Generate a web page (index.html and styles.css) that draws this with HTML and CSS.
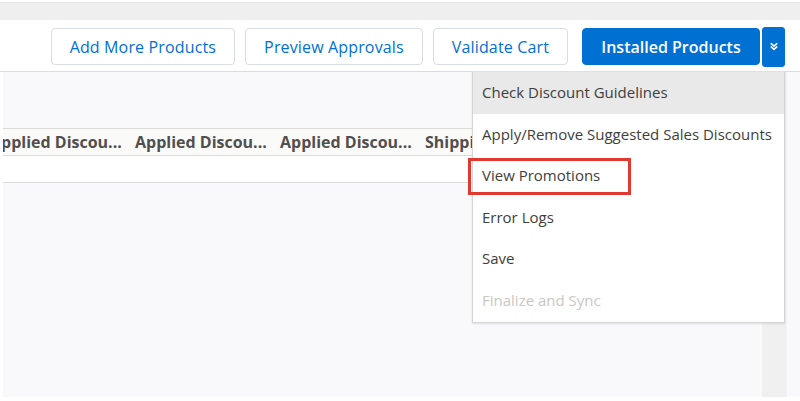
FILE: index.html
```html
<!DOCTYPE html>
<html>
<head>
<meta charset="utf-8">
<link rel="stylesheet" href="styles.css">
</head>
<body>
<div class="page">
  <div class="topband"></div>
  <div class="toolbar">
    <button class="btn">Add More Products</button>
    <button class="btn">Preview Approvals</button>
    <button class="btn">Validate Cart</button>
    <div class="split">
      <button class="btn btn-brand">Installed Products</button>
      <button class="btn btn-brand btn-icon" aria-label="More actions">
        <svg width="8" height="9" viewBox="0 0 10 10"><path d="M1.5 1.5 L5 4.5 L8.5 1.5 M1.5 5.5 L5 8.5 L8.5 5.5" fill="none" stroke="#fff" stroke-width="2" stroke-linecap="round" stroke-linejoin="round"/></svg>
      </button>
    </div>
  </div>
  <div class="main">
    <div class="content">
      <div class="table">
        <div class="row head">
          <div class="cell">Applied Discou...</div>
          <div class="cell">Applied Discou...</div>
          <div class="cell">Applied Discou...</div>
          <div class="cell cut">Shipping</div>
        </div>
        <div class="row body"></div>
      </div>
    </div>
    <div class="track"></div>
    <div class="edge"></div>
  </div>
  <ul class="menu">
    <li class="item hover">Check Discount Guidelines</li>
    <li class="item">Apply/Remove Suggested Sales Discounts</li>
    <li class="item">View Promotions</li>
    <li class="item">Error Logs</li>
    <li class="item">Save</li>
    <li class="item disabled">Finalize and Sync</li>
  </ul>
  <div class="highlight"></div>
</div>
</body>
</html>
```

FILE: styles.css
```css
* { box-sizing: border-box; }
html, body { margin: 0; padding: 0; }
body {
  width: 800px;
  height: 401px;
  overflow: hidden;
  background: #ffffff;
  font-family: "Open Sans", "Liberation Sans", sans-serif;
}
.page {
  position: relative;
  height: 401px;
  display: flex;
  flex-direction: column;
  padding-top: 2px;
}
.topband {
  height: 18px;
  background: #f0efef;
  border-top: 1px solid #e6e5e5;
}
.toolbar {
  height: 52px;
  background: #ffffff;
  border-bottom: 1px solid #dcdcdc;
  display: flex;
  align-items: center;
  justify-content: flex-end;
  padding-right: 15px;
  padding-top: 2px;
}
.btn {
  height: 37px;
  margin-left: 10px;
  padding: 0 18px;
  border: 1px solid #d8dde6;
  border-radius: 4px;
  background: #ffffff;
  color: #0070d2;
  font-family: "Open Sans", "Liberation Sans", sans-serif;
  font-size: 16px;
  letter-spacing: 0.15px;
  white-space: nowrap;
}
.btn:first-child { margin-left: 0; }
.split {
  display: flex;
  align-items: center;
  margin-left: 14px;
}
.btn-brand {
  margin-left: 0;
  background: #0070d2;
  border-color: #0070d2;
  color: #ffffff;
  font-weight: 600;
  letter-spacing: 0;
  width: 178px;
  padding: 0;
}
.btn-icon {
  width: 23px;
  height: 40px;
  margin-left: 2px;
  padding: 0;
  display: flex;
  align-items: center;
  justify-content: center;
  border-radius: 3px;
}
.main {
  flex: 1;
  display: flex;
  background: #ffffff;
  padding-left: 3px;
  padding-bottom: 4px;
}
.content {
  width: 759px;
  background: #f9f9fc;
  padding-top: 56px;
  overflow: hidden;
}
.track {
  width: 24px;
  background: #f0f0f0;
}
.edge {
  flex: 1;
  background: #f9f9fc;
  border-left: 1px solid #f3f3f6;
}
.table {
  margin-left: -13px;
}
.row {
  display: flex;
  height: 27px;
  border-bottom: 1px solid #dddbda;
}
.row.head {
  background: #fafaf9;
  border-top: 1px solid #dddbda;
  height: 28px;
}
.row.body {
  background: #ffffff;
}
.cell {
  flex: 0 0 145px;
  line-height: 26px;
  font-size: 16px;
  font-weight: 700;
  color: #514f4d;
  white-space: nowrap;
}
.cell.cut {
  flex: 0 0 47px;
  overflow: hidden;
}
.menu {
  position: absolute;
  top: 71px;
  left: 472px;
  width: 313px;
  margin: 0;
  padding: 0;
  list-style: none;
  background: #ffffff;
  border: 1px solid #d4d4d4;
  border-top-color: #e0e0e0;
  box-shadow: 0 1px 2px rgba(0, 0, 0, 0.1);
}
.item {
  height: 41.6px;
  line-height: 41.6px;
  padding-left: 9px;
  font-size: 15px;
  color: #3e3e3c;
  white-space: nowrap;
}
.item.hover { background: #e9e9e9; }
.item.disabled { color: #c9c7c5; }
.highlight {
  position: absolute;
  left: 468px;
  top: 158px;
  width: 163px;
  height: 37px;
  border: 3px solid #e2382f;
}
```
